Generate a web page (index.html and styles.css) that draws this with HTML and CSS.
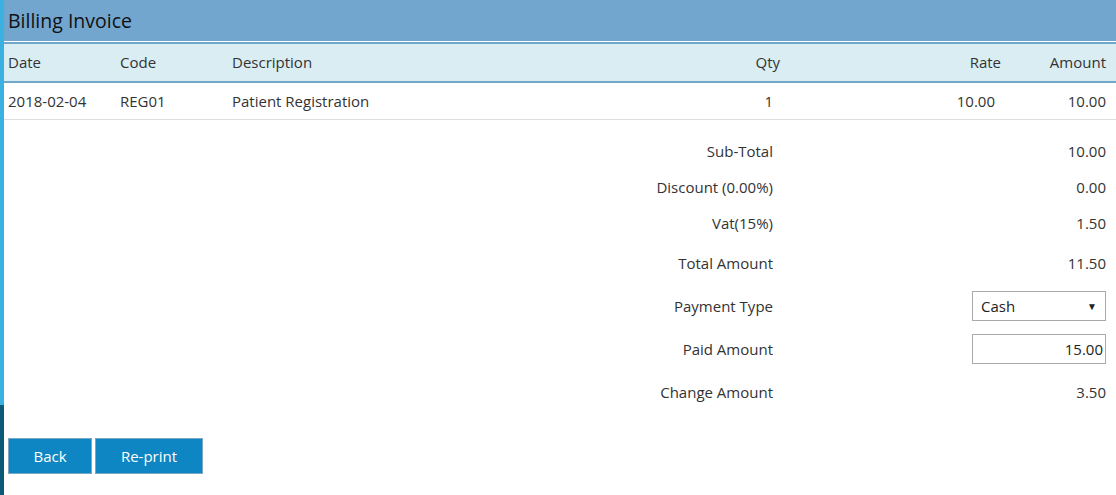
FILE: index.html
```html
<!DOCTYPE html>
<html>
<head>
<meta charset="utf-8">
<title>Billing Invoice</title>
<link rel="stylesheet" href="styles.css">
</head>
<body>
<div class="layout">
  <div class="edge">
    <div class="edge-top"></div>
    <div class="edge-bottom"></div>
  </div>
  <main class="main">
    <header class="title-bar">Billing Invoice</header>
    <div class="items">
      <div class="row head">
        <div class="c c-date">Date</div>
        <div class="c c-code">Code</div>
        <div class="c c-desc">Description</div>
        <div class="c c-qty">Qty</div>
        <div class="c c-rate">Rate</div>
        <div class="c c-amt">Amount</div>
      </div>
      <div class="row body">
        <div class="c c-date">2018-02-04</div>
        <div class="c c-code">REG01</div>
        <div class="c c-desc">Patient Registration</div>
        <div class="c c-qty">1</div>
        <div class="c c-rate">10.00</div>
        <div class="c c-amt">10.00</div>
      </div>
    </div>
    <div class="summary">
      <div class="s-row short"><div class="s-label">Sub-Total</div><div class="s-val">10.00</div></div>
      <div class="s-row short"><div class="s-label">Discount (0.00%)</div><div class="s-val">0.00</div></div>
      <div class="s-row short"><div class="s-label">Vat(15%)</div><div class="s-val">1.50</div></div>
      <div class="s-row"><div class="s-label">Total Amount</div><div class="s-val">11.50</div></div>
      <div class="s-row"><div class="s-label">Payment Type</div><div class="s-val">
        <div class="select"><span>Cash</span><span class="caret">&#9660;</span></div>
      </div></div>
      <div class="s-row"><div class="s-label">Paid Amount</div><div class="s-val">
        <div class="input">15.00</div>
      </div></div>
      <div class="s-row"><div class="s-label">Change Amount</div><div class="s-val">3.50</div></div>
    </div>
    <div class="actions">
      <button class="btn btn-back">Back</button>
      <button class="btn btn-print">Re-print</button>
    </div>
  </main>
</div>
</body>
</html>
```
FILE: styles.css
```css
html, body {
  margin: 0;
  padding: 0;
  background: #fff;
}
body {
  font-family: "Open Sans", "Noto Sans", sans-serif;
  font-size: 15px;
  color: #333;
}
.layout {
  display: flex;
  width: 1116px;
  height: 495px;
  overflow: hidden;
}
.edge {
  width: 4px;
  display: flex;
  flex-direction: column;
  flex-shrink: 0;
}
.edge-top {
  height: 405px;
  background: #3bb1e2;
}
.edge-bottom {
  flex: 1;
  background: #0c5a7a;
}
.main {
  flex: 1;
  display: flex;
  flex-direction: column;
}
.title-bar {
  height: 41px;
  line-height: 41px;
  background: #72a6cf;
  color: #111;
  font-size: 19.5px;
  padding-left: 4px;
  border-bottom: 1px solid #fff;
}
.row {
  display: grid;
  grid-template-columns: 112px 112px 472px 84px 221px 1fr;
}
.c {
  padding: 0 4px;
}
.c-qty, .c-rate, .c-amt {
  text-align: right;
}
.c-amt {
  padding-right: 10px;
}
.head {
  height: 37px;
  line-height: 37px;
  background: #d9edf3;
  border-top: 2px solid #6fa8c8;
  border-bottom: 2px solid #6fa8c8;
  color: #333;
}
.body {
  height: 36px;
  line-height: 36px;
  border-bottom: 1px solid #ddd;
}
.body .c-qty {
  padding-right: 11px;
}
.body .c-rate {
  padding-right: 10px;
}
.summary {
  padding-top: 13px;
  display: flex;
  flex-direction: column;
}
.s-row {
  display: grid;
  grid-template-columns: 769px 1fr;
  height: 43px;
  align-items: center;
}
.s-row.short {
  height: 36px;
}
.s-label {
  text-align: right;
}
.s-val {
  display: flex;
  justify-content: flex-end;
  padding-right: 10px;
}
.select, .input {
  width: 134px;
  height: 30px;
  box-sizing: border-box;
  border: 1px solid #aaa;
  background: #fff;
  display: flex;
  align-items: center;
  padding: 0 8px;
  color: #222;
}
.select {
  justify-content: space-between;
}
.caret {
  font-size: 10px;
  color: #222;
}
.input {
  justify-content: flex-end;
  padding-right: 2px;
}
.actions {
  display: flex;
  gap: 3px;
  padding: 25px 0 0 4px;
}
.btn {
  height: 36px;
  background: #0e86c3;
  border: 1px solid #7aa8c4;
  color: #fff;
  font-family: "Open Sans", "Noto Sans", sans-serif;
  font-size: 15px;
  padding: 0;
}
.btn-back {
  width: 84px;
}
.btn-print {
  width: 108px;
}
```
